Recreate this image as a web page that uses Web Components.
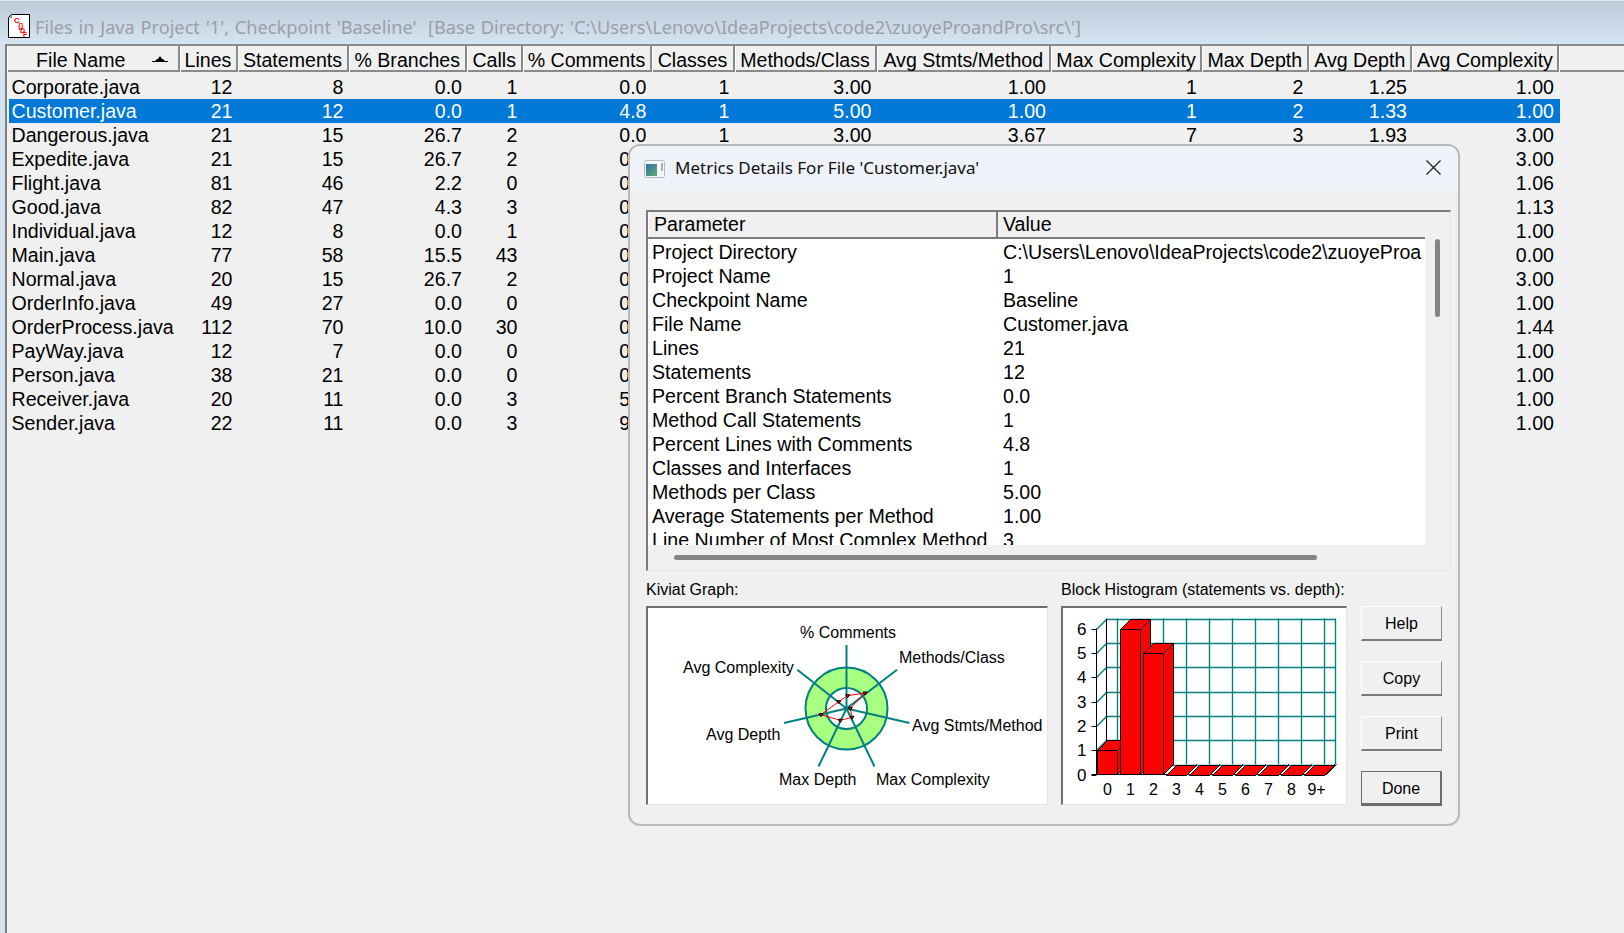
<!DOCTYPE html>
<html>
<head>
<meta charset="utf-8">
<title>Files in Java Project</title>
<style>
  html, body { margin: 0; padding: 0; height: 100%; overflow: hidden; background: #f0f0f0; }
</style>
</head>
<body>
<app-window title-text="Files in Java Project '1', Checkpoint 'Baseline'  [Base Directory: 'C:\Users\Lenovo\IdeaProjects\code2\zuoyeProandPro\src\']">
  <files-table></files-table>
  <details-dialog slot="dialog" title-text="Metrics Details For File 'Customer.java'">
    <param-list slot="list"></param-list>
    <kiviat-graph slot="kiviat"></kiviat-graph>
    <block-histogram slot="histogram"></block-histogram>
    <win-button slot="buttons">Help</win-button>
    <win-button slot="buttons">Copy</win-button>
    <win-button slot="buttons">Print</win-button>
    <win-button slot="buttons" default>Done</win-button>
  </details-dialog>
</app-window>

<script>
const UI_FONT = '"Liberation Sans", Arial, sans-serif';

const windowTemplate = document.createElement('template');
windowTemplate.innerHTML = `
  <style>
    :host {
      display: flex;
      flex-direction: column;
      height: 100vh;
      position: relative;
      font-family: ${UI_FONT};
      color: #000;
    }
    .titlebar {
      height: 44px;
      flex: none;
      box-sizing: border-box;
      display: flex;
      align-items: flex-start;
      padding: 14px 0 0 8px;
      gap: 5px;
      background: linear-gradient(#bccad9, #d6e3f1);
      border-top: 1px solid #e3e8ee;
    }
    .titlebar svg { flex: none; margin-top: -1px; }
    .title {
      font: 18.2px/24px "Noto Sans", sans-serif;
      word-spacing: 1px;
      color: #9b9fa5;
      white-space: pre;
    }
    .frame {
      flex: 1;
      display: flex;
      background: #d6e3f1;
      padding-left: 5px;
      min-height: 0;
    }
    .client {
      flex: 1;
      background: #f0f0f0;
      border-left: 2px solid #7f7f7f;
      min-width: 0;
    }
  </style>
  <div class="titlebar">
    <svg width="22" height="24" viewBox="0 0 22 24">
      <path d="M3.500.5h18v23h-21v-20z" fill="#fff" stroke="#000"/>
      <path d="M1 4l3-3v3z" fill="#888"/>
      <text x="6" y="9" font-family="Liberation Sans" font-size="8" font-weight="700" fill="#f00">C</text>
      <text x="10" y="14" font-family="Liberation Sans" font-size="7" font-weight="700" fill="#f00">{}</text>
      <text x="12" y="19" font-family="Liberation Sans" font-size="7" font-weight="700" fill="#f00">D</text>
      <text x="15" y="23" font-family="Liberation Sans" font-size="7" font-weight="700" fill="#f00">F</text>
    </svg>
    <div class="title"></div>
  </div>
  <div class="frame">
    <div class="client"><slot></slot></div>
  </div>
  <slot name="dialog"></slot>
`;

class AppWindow extends HTMLElement {
  constructor() {
    super();
    this.attachShadow({mode: 'open'});
    this.shadowRoot.appendChild(windowTemplate.content.cloneNode(true));
    this.shadowRoot.querySelector('.title').textContent = this.getAttribute('title-text');
  }
}
customElements.define('app-window', AppWindow);

const COLUMNS = [
  ['File Name', 172.5], ['Lines', 58], ['Statements', 111], ['% Branches', 118.5], ['Calls', 55.5],
  ['% Comments', 129], ['Classes', 83], ['Methods/Class', 142], ['Avg Stmts/Method', 174.5],
  ['Max Complexity', 151], ['Max Depth', 106.5], ['Avg Depth', 103.5], ['Avg Complexity', 147]
];

// cells behind the dialog are left out, only what shows matters
const ROWS = [
  ['Corporate.java', '12', '8', '0.0', '1', '0.0', '1', '3.00', '1.00', '1', '2', '1.25', '1.00'],
  ['Customer.java', '21', '12', '0.0', '1', '4.8', '1', '5.00', '1.00', '1', '2', '1.33', '1.00'],
  ['Dangerous.java', '21', '15', '26.7', '2', '0.0', '1', '3.00', '3.67', '7', '3', '1.93', '3.00'],
  ['Expedite.java', '21', '15', '26.7', '2', '0.0', '', '', '', '', '', '', '3.00'],
  ['Flight.java', '81', '46', '2.2', '0', '0.0', '', '', '', '', '', '', '1.06'],
  ['Good.java', '82', '47', '4.3', '3', '0.0', '', '', '', '', '', '', '1.13'],
  ['Individual.java', '12', '8', '0.0', '1', '0.0', '', '', '', '', '', '', '1.00'],
  ['Main.java', '77', '58', '15.5', '43', '0.0', '', '', '', '', '', '', '0.00'],
  ['Normal.java', '20', '15', '26.7', '2', '0.0', '', '', '', '', '', '', '3.00'],
  ['OrderInfo.java', '49', '27', '0.0', '0', '0.0', '', '', '', '', '', '', '1.00'],
  ['OrderProcess.java', '112', '70', '10.0', '30', '0.0', '', '', '', '', '', '', '1.44'],
  ['PayWay.java', '12', '7', '0.0', '0', '0.0', '', '', '', '', '', '', '1.00'],
  ['Person.java', '38', '21', '0.0', '0', '0.0', '', '', '', '', '', '', '1.00'],
  ['Receiver.java', '20', '11', '0.0', '3', '5.0', '', '', '', '', '', '', '1.00'],
  ['Sender.java', '22', '11', '0.0', '3', '9.1', '', '', '', '', '', '', '1.00']
];

const tableTemplate = document.createElement('template');
tableTemplate.innerHTML = `
  <style>
    :host {
      display: block;
      font: 19.6px/24px ${UI_FONT};
      white-space: nowrap;
    }
    .head, .row { display: grid; }
    .head {
      height: 28px;
      box-sizing: border-box;
      border-top: 2px solid #8a8a8a;
      border-bottom: 2px solid #8a8a8a;
    }
    .head div {
      box-sizing: border-box;
      text-align: center;
      line-height: 24px;
      padding-top: 2px;
      border-left: 1px solid #fff;
      border-right: 2px solid #8a8a8a;
      position: relative;
    }
    .head svg { position: absolute; left: 144px; top: 9px; }
    .body { padding: 3px 0 0 2px; }
    .row { height: 24px; }
    .row div { text-align: right; padding-right: 5px; box-sizing: border-box; overflow: hidden; }
    .row div:first-child { text-align: left; padding: 0 0 0 2.500px; }
    .row.sel { background: #0078d7; color: #fff; }
    .rows { width: 1551px; }
  </style>
  <div class="head"></div>
  <div class="body"><div class="rows"></div></div>
`;

class FilesTable extends HTMLElement {
  constructor() {
    super();
    this.attachShadow({mode: 'open'});
    this.shadowRoot.appendChild(tableTemplate.content.cloneNode(true));
  }
  connectedCallback() {
    const widths = COLUMNS.map(c => c[1] + 'px').join(' ');
    const head = this.shadowRoot.querySelector('.head');
    head.style.gridTemplateColumns = widths + ' 1fr';
    COLUMNS.forEach(c => {
      const cell = document.createElement('div');
      cell.textContent = c[0];
      head.appendChild(cell);
    });
    head.firstChild.style.paddingRight = '24px';
    head.firstChild.insertAdjacentHTML('beforeend',
      '<svg width="16" height="7" viewBox="0 0 16 7"><path d="M0 6h3l2-2h1l2-3 2 3h1l2 2h3v1H0z" fill="#000"/></svg>');
    head.appendChild(document.createElement('div')).style.borderRight = 'none';

    const rows = this.shadowRoot.querySelector('.rows');
    const rowWidths = COLUMNS.map((c, i) => (i == 0 ? c[1] - 2 : c[1]) + 'px').join(' ');
    ROWS.forEach((r, i) => {
      const row = document.createElement('div');
      row.className = i == 1 ? 'row sel' : 'row';
      row.style.gridTemplateColumns = rowWidths;
      r.forEach(v => {
        const cell = document.createElement('div');
        cell.textContent = v;
        row.appendChild(cell);
      });
      rows.appendChild(row);
    });
  }
}
customElements.define('files-table', FilesTable);

const dialogTemplate = document.createElement('template');
dialogTemplate.innerHTML = `
  <style>
    :host {
      display: flex;
      flex-direction: column;
      position: absolute;
      left: 628px;
      top: 144px;
      width: 832px;
      height: 682px;
      box-sizing: border-box;
      background: #f0f0f0;
      border: 2px solid #b9b9b9;
      border-radius: 12px;
      overflow: hidden;
      font-family: ${UI_FONT};
    }
    .bar {
      height: 45px;
      flex: none;
      display: flex;
      align-items: center;
      background: #eff3f9;
      padding-left: 14px;
      gap: 10px;
    }
    .name {
      font: 17px/24px "Noto Sans", sans-serif;
      color: #111;
      flex: 1;
      margin-top: -2px;
    }
    .close { margin: 0 17px 2px 0; }
    .content {
      flex: 1;
      padding: 19px 7px 0 16px;
      display: flex;
      flex-direction: column;
    }
    .lower {
      display: grid;
      grid-template-columns: 402px 286px 82px;
      column-gap: 13px;
      grid-template-rows: 35px 199px;
    }
    .lower .label {
      font-size: 16px;
      line-height: 38px;
      height: 35px;
      color: #000;
      white-space: nowrap;
    }
    .buttons {
      display: flex;
      flex-direction: column;
      justify-content: space-between;
      margin: 0 0 -1px 1px;
    }
  </style>
  <div class="bar">
    <svg width="21" height="18" viewBox="0 0 21 18">
      <defs><linearGradient id="ig" x1="0" y1="0" x2="1" y2="1">
        <stop offset="0" stop-color="#2f6fa8"/><stop offset="1" stop-color="#5bb070"/>
      </linearGradient></defs>
      <rect x=".5" y=".5" width="20" height="17" rx="2" fill="#f4f6f8" stroke="#b4b8bc"/>
      <rect x="2" y="4" width="11" height="12" fill="url(#ig)"/>
      <rect x="14" y="3" width="2" height="8" fill="#fff"/>
      <rect x="17" y="3" width="2" height="8" fill="#9fb0a8"/>
    </svg>
    <div class="name"></div>
    <svg class="close" width="15" height="15" viewBox="0 0 15 15">
      <path d="M.5.500l14 14M14.500.500l-14 14" stroke="#222" stroke-width="1.300" fill="none"/>
    </svg>
  </div>
  <div class="content">
    <slot name="list"></slot>
    <div class="lower">
      <div class="label">Kiviat Graph:</div>
      <div class="label">Block Histogram (statements vs. depth):</div>
      <div></div>
      <slot name="kiviat"></slot>
      <slot name="histogram"></slot>
      <div class="buttons"><slot name="buttons"></slot></div>
    </div>
  </div>
`;

class DetailsDialog extends HTMLElement {
  constructor() {
    super();
    this.attachShadow({mode: 'open'});
    this.shadowRoot.appendChild(dialogTemplate.content.cloneNode(true));
    this.shadowRoot.querySelector('.name').textContent = this.getAttribute('title-text');
  }
}
customElements.define('details-dialog', DetailsDialog);

const PARAMS = [
  ['Project Directory', 'C:\\Users\\Lenovo\\IdeaProjects\\code2\\zuoyeProa'],
  ['Project Name', '1'],
  ['Checkpoint Name', 'Baseline'],
  ['File Name', 'Customer.java'],
  ['Lines', '21'],
  ['Statements', '12'],
  ['Percent Branch Statements', '0.0'],
  ['Method Call Statements', '1'],
  ['Percent Lines with Comments', '4.8'],
  ['Classes and Interfaces', '1'],
  ['Methods per Class', '5.00'],
  ['Average Statements per Method', '1.00'],
  ['Line Number of Most Complex Method', '3']
];

const listTemplate = document.createElement('template');
listTemplate.innerHTML = `
  <style>
    :host {
      display: grid;
      grid-template-columns: 1fr 25px;
      grid-template-rows: 1fr 25px;
      width: 805px;
      height: 361px;
      box-sizing: border-box;
      border-top: 2px solid #7c7c7c;
      border-left: 2px solid #7c7c7c;
      border-bottom: 1px solid #e6e6e6;
      border-right: 1px solid #e6e6e6;
      font: 19.6px/24px ${UI_FONT};
      white-space: nowrap;
    }
    .view { background: #fff; overflow: hidden; }
    .head, .row { display: grid; grid-template-columns: 348px 1fr; }
    .head {
      height: 27px;
      box-sizing: border-box;
      background: #f0f0f0;
      border-bottom: 2px solid #7c7c7c;
    }
    .head div { padding-left: 5px; line-height: 25px; border-left: 1px solid #fff; }
    .head div + div { border-left: 2px solid #7c7c7c; padding-left: 5px; }
    .rows { height: 0; padding-top: 1px; }
    .row div { padding-left: 4px; overflow: hidden; }
    .row div + div { padding-left: 7px; }
    .vtrack { background: #f0f0f0; border-left: 1px solid #f6f6f6; padding: 27px 0 0 9px; }
    .vthumb { width: 5px; height: 78px; background: #858585; border-radius: 3px; }
    .htrack { background: #f0f0f0; padding: 10px 0 0 26px; }
    .hthumb { width: 643px; height: 5px; background: #858585; border-radius: 3px; }
  </style>
  <div class="view">
    <div class="head"><div>Parameter</div><div>Value</div></div>
    <div class="rows"></div>
  </div>
  <div class="vtrack"><div class="vthumb"></div></div>
  <div class="htrack"><div class="hthumb"></div></div>
`;

class ParamList extends HTMLElement {
  constructor() {
    super();
    this.attachShadow({mode: 'open'});
    this.shadowRoot.appendChild(listTemplate.content.cloneNode(true));
  }
  connectedCallback() {
    const rows = this.shadowRoot.querySelector('.rows');
    PARAMS.forEach(p => {
      const row = document.createElement('div');
      row.className = 'row';
      row.innerHTML = '<div></div><div></div>';
      row.children[0].textContent = p[0];
      row.children[1].textContent = p[1];
      rows.appendChild(row);
    });
  }
}
customElements.define('param-list', ParamList);

const boxStyle = `
  :host {
    display: block;
    box-sizing: border-box;
    background: #fff;
    border-top: 2px solid #6f6f6f;
    border-left: 2px solid #6f6f6f;
    border-bottom: 1px solid #e4e4e4;
    border-right: 1px solid #e4e4e4;
  }
  svg { display: block; }
  text { font-family: ${UI_FONT}; font-size: 16px; fill: #000; }
`;

const kiviatTemplate = document.createElement('template');
kiviatTemplate.innerHTML = `
  <style>${boxStyle}</style>
  <svg width="399" height="196" viewBox="648 609 399 196">
    <circle cx="846.500" cy="709.500" r="41" fill="#a9ff80" stroke="#008080" stroke-width="2"/>
    <circle cx="846.500" cy="709.500" r="20.500" fill="#fff" stroke="#008080" stroke-width="2"/>
    <g stroke="#008080" stroke-width="2" fill="none">
      <path d="M846.500 709.500V646"/>
      <path d="M846.500 709.500L897 670.700"/>
      <path d="M846.500 709.500L909.500 724"/>
      <path d="M846.500 709.500L874.500 767.500"/>
      <path d="M846.500 709.500L818.500 767.500"/>
      <path d="M846.500 709.500L784 724"/>
      <path d="M846.500 709.500L797.300 670.700"/>
    </g>
    <polygon points="847.700,696.700 865,694 850.300,709.300 852,718.300 840.300,721.300 821,715.700 838.700,702.700"
      fill="none" stroke="#f00" stroke-width="1"/>
    <g id="marks" fill="#f00" stroke="#000" stroke-width="1"></g>
    <text x="800" y="639">% Comments</text>
    <text x="899" y="664">Methods/Class</text>
    <text x="683" y="674">Avg Complexity</text>
    <text x="912" y="732">Avg Stmts/Method</text>
    <text x="706" y="741">Avg Depth</text>
    <text x="779" y="786">Max Depth</text>
    <text x="876" y="786">Max Complexity</text>
  </svg>
`;

class KiviatGraph extends HTMLElement {
  constructor() {
    super();
    this.attachShadow({mode: 'open'});
    this.shadowRoot.appendChild(kiviatTemplate.content.cloneNode(true));
  }
  connectedCallback() {
    const points = [[847.7,696.7],[865,694],[850.3,709.3],[852,718.3],[840.3,721.3],[821,715.7],[838.7,702.7]];
    let out = '';
    points.forEach(p => {
      out += '<path d="M' + (p[0] - 2) + ' ' + (p[1] - 1) + 'h4l-2 3z"/>';
    });
    this.shadowRoot.getElementById('marks').innerHTML = out;
  }
}
customElements.define('kiviat-graph', KiviatGraph);

const histogramTemplate = document.createElement('template');
histogramTemplate.innerHTML = `
  <style>${boxStyle}</style>
  <svg width="283" height="196" viewBox="1063 609 283 196"></svg>
`;

class BlockHistogram extends HTMLElement {
  constructor() {
    super();
    this.attachShadow({mode: 'open'});
    this.shadowRoot.appendChild(histogramTemplate.content.cloneNode(true));
  }
  connectedCallback() {
    const front = 775.5;       // y of value 0 at the front
    const step = 24.33;        // one unit of height
    const dx = 10, dy = 10;    // depth of the 3D view
    const left = 1096.5;
    const colW = 23;
    const backRight = 1335.5;
    const teal = 'stroke="#008080" stroke-width="1.400" fill="none"';
    let s = '';

    // back wall grid
    for (let i = 0; i <= 6; i++) {
      const y = Math.round(front - dy - i * step) + .5;
      s += `<path d="M${left + dx} ${y}H${backRight}" ${teal}/>`;
      if (i > 0) {
        const fy = Math.round(front - i * step) + .5;
        s += `<path d="M${left} ${fy}L${left + dx} ${y}" ${teal}/>`;
      }
    }
    for (let k = 0; k < 10; k++) {
      const x = left + dx + 11 + k * colW;
      s += `<path d="M${x} ${front - dy - 6 * step}V${front - dy}" ${teal}/>`;
    }
    s += `<path d="M${backRight} ${front - dy - 6 * step}V${front - dy}" ${teal}/>`;
    s += `<path d="M${left + dx} ${front - dy - 6 * step}V${front - dy}" stroke="#000" fill="none"/>`;

    // axis
    s += `<path d="M${left} ${front - 6 * step}V${front}M${left - 5} ${front}H${left + 230}" stroke="#000" fill="none"/>`;
    s += `<path d="M${left + 230} ${front}l10 -10" stroke="#000" fill="none"/>`;
    for (let i = 0; i <= 6; i++) {
      const fy = Math.round(front - i * step) + .5;
      s += `<path d="M${left - 5} ${fy}H${left}" stroke="#000" fill="none"/>`;
      s += `<text x="${left - 10}" y="${fy + 5}" text-anchor="end" style="font-size:17px">${i}</text>`;
    }

    // bars
    const values = [1, 6, 5, 0, 0, 0, 0, 0, 0, 0];
    const labels = ['0', '1', '2', '3', '4', '5', '6', '7', '8', '9+'];
    values.forEach((v, k) => {
      const x0 = left + 1 + k * colW, w = 20;
      const top = Math.round(front - v * step) + .5;
      const style = 'fill="#f00" stroke="#000"';
      s += `<polygon points="${x0 + w},${top} ${x0 + w + dx},${top - dy} ${x0 + w + dx},${front - dy} ${x0 + w},${front}" ${style}/>`;
      s += `<polygon points="${x0},${top} ${x0 + dx},${top - dy} ${x0 + w + dx},${top - dy} ${x0 + w},${top}" ${style}/>`;
      if (v > 0) s += `<rect x="${x0}" y="${top}" width="${w}" height="${front - top}" ${style}/>`;
      s += `<text x="${x0 + (k == 9 ? 12 : 10)}" y="796" text-anchor="middle">${labels[k]}</text>`;
    });
    this.shadowRoot.querySelector('svg').innerHTML = s;
  }
}
customElements.define('block-histogram', BlockHistogram);

const buttonTemplate = document.createElement('template');
buttonTemplate.innerHTML = `
  <style>
    :host {
      display: flex;
      align-items: center;
      justify-content: center;
      height: 35px;
      box-sizing: border-box;
      background: #f0f0f0;
      border-top: 1px solid #fff;
      border-left: 1px solid #fff;
      border-right: 1px solid #8a8a8a;
      border-bottom: 2px solid #7a7a7a;
      font: 16px/20px ${UI_FONT};
      color: #000;
      padding-top: 2px;
    }
    :host([default]) {
      outline: 1px solid #6c6c6c;
      outline-offset: -1px;
      border-bottom: 3px solid #6c6c6c;
      border-right: 2px solid #6c6c6c;
    }
  </style>
  <slot></slot>
`;

class WinButton extends HTMLElement {
  constructor() {
    super();
    this.attachShadow({mode: 'open'});
    this.shadowRoot.appendChild(buttonTemplate.content.cloneNode(true));
  }
}
customElements.define('win-button', WinButton);
</script>
</body>
</html>
